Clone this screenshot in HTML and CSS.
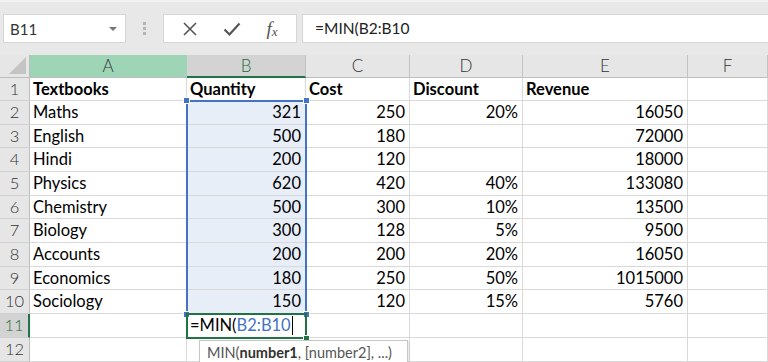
FILE: index.html
```html
<!doctype html>
<html>
 <head>
  <meta charset="UTF-8">
  <title>MIN</title>
  <link rel="stylesheet" href="styles.css">
 </head>
 <body>
  <!--S. bar-->
  <div class="bar">
   <div class="namebox"><span>B11</span><i class="drop"></i></div>
   <div class="grip"><b></b><b></b><b></b></div>
   <div class="fbtns">
    <svg width="16" height="16" viewBox="0 0 16 16"><path d="M2 2L14 14M14 2L2 14" stroke="#555" stroke-width="1.6" fill="none"/></svg>
    <svg width="18" height="16" viewBox="0 0 18 16"><path d="M1.5 8.5L6.5 13.5L16.5 2.5" stroke="#555" stroke-width="2.2" fill="none"/></svg>
    <span class="fx">f<sub>x</sub></span>
   </div>
   <div class="finput">=MIN(B2:B10</div>
  </div>
  <!--E. bar-->

  <!--S. sheet-->
  <div class="sheet">
   <div class="grid">
    <div class="corner"><i></i></div>
    <div class="ch sel">A</div><div class="ch act">B</div><div class="ch">C</div><div class="ch">D</div><div class="ch">E</div><div class="ch">F</div>

    <div class="rh">1</div><div class="c b">Textbooks</div><div class="c b">Quantity</div><div class="c b">Cost</div><div class="c b">Discount</div><div class="c b">Revenue</div><div class="c"></div>
    <div class="rh">2</div><div class="c">Maths</div><div class="c n r">321</div><div class="c n">250</div><div class="c n">20%</div><div class="c n">16050</div><div class="c"></div>
    <div class="rh">3</div><div class="c">English</div><div class="c n r">500</div><div class="c n">180</div><div class="c n"></div><div class="c n">72000</div><div class="c"></div>
    <div class="rh">4</div><div class="c">Hindi</div><div class="c n r">200</div><div class="c n">120</div><div class="c n"></div><div class="c n">18000</div><div class="c"></div>
    <div class="rh">5</div><div class="c">Physics</div><div class="c n r">620</div><div class="c n">420</div><div class="c n">40%</div><div class="c n">133080</div><div class="c"></div>
    <div class="rh">6</div><div class="c">Chemistry</div><div class="c n r">500</div><div class="c n">300</div><div class="c n">10%</div><div class="c n">13500</div><div class="c"></div>
    <div class="rh">7</div><div class="c">Biology</div><div class="c n r">300</div><div class="c n">128</div><div class="c n">5%</div><div class="c n">9500</div><div class="c"></div>
    <div class="rh">8</div><div class="c">Accounts</div><div class="c n r">200</div><div class="c n">200</div><div class="c n">20%</div><div class="c n">16050</div><div class="c"></div>
    <div class="rh">9</div><div class="c">Economics</div><div class="c n r">180</div><div class="c n">250</div><div class="c n">50%</div><div class="c n">1015000</div><div class="c"></div>
    <div class="rh">10</div><div class="c">Sociology</div><div class="c n r">150</div><div class="c n">120</div><div class="c n">15%</div><div class="c n">5760</div><div class="c"></div>
    <div class="rh cur">11</div><div class="c"></div><div class="c edit">=MIN(<span class="ref">B2:B10</span><i class="caret"></i></div><div class="c"></div><div class="c"></div><div class="c"></div><div class="c"></div>
    <div class="rh">12</div><div class="c"></div><div class="c"></div><div class="c"></div><div class="c"></div><div class="c"></div><div class="c"></div>
   </div>

   <!-- range + active cell overlays -->
   <div class="range"><i class="h tl"></i><i class="h tr"></i><i class="h bl"></i><i class="h br"></i></div>
   <div class="active"><i class="h br g"></i></div>
   <div class="tip">MIN(<b>number1</b>, [number2], ...)</div>
  </div>
  <!--E. sheet-->
 </body>
</html>
```

FILE: styles.css
```css
*{padding:0;margin:0;box-sizing:border-box;}
body{background:#e8e8e8;font-family:Lato,"Open Sans",sans-serif;color:#000;width:768px;height:362px;overflow:hidden;}

/*S. bar*/
.bar{height:55px;display:flex;align-items:flex-start;padding:14px 0 0 3px;border-top:2px solid #f2f2f2;}
.namebox{width:123px;height:29px;background:#fff;border:1px solid #d6d6d6;display:flex;align-items:center;justify-content:space-between;padding:0 8px 0 6px;font-size:15px;color:#333;margin-top:-2px;}
.namebox .drop{width:0;height:0;border-left:4px solid transparent;border-right:4px solid transparent;border-top:4px solid #777;}
.grip{width:37px;height:29px;display:flex;flex-direction:column;align-items:center;justify-content:center;gap:2px;margin-top:-2px;}
.grip b{width:3px;height:3px;background:#b5b5b5;}
.fbtns{width:134px;height:29px;background:#fff;border:1px solid #d6d6d6;display:flex;align-items:center;justify-content:space-around;padding:0 6px;margin-top:-2px;}
.fx{font-family:"Liberation Serif",serif;font-style:italic;font-size:19px;color:#555;line-height:1;}
.fx sub{font-size:13px;vertical-align:-1px;}
.finput{flex:1;height:29px;background:#fff;border:1px solid #d6d6d6;border-right:none;margin:-2px 0 0 5px;padding:0 12px;font-size:15.5px;line-height:27px;color:#222;}
/*E. bar*/

/*S. sheet*/
.sheet{position:relative;}
.grid{display:grid;grid-template-columns:30px 157px 119px 104px 113px 165px 80px;grid-template-rows:23px 23px 24px 23px 24px 24px 23px 24px 24px 23px 24px 24px 24px;background:#fff;}
.corner{background:#e6e6e6;border-right:1px solid #bdbdbd;border-bottom:1px solid #bdbdbd;position:relative;}
.corner i{position:absolute;right:3px;bottom:3px;width:0;height:0;border-left:17px solid transparent;border-bottom:17px solid #c4c4c4;}
.ch{background:#e6e6e6;border-right:1px solid #c3c3c3;border-bottom:1px solid #bdbdbd;text-align:center;font-size:17px;font-weight:300;line-height:22px;color:#333;}
.ch.sel{background:#9fd5b7;border-right-color:#9fd5b7;}
.ch.act{background:#d3d3d3;border-bottom:2px solid #217346;color:#1f6b3f;}
.rh{background:#e6e6e6;border-right:1px solid #bdbdbd;border-bottom:1px solid #d0d0d0;text-align:center;font-size:16.5px;font-weight:300;color:#333;line-height:23px;}
.rh.cur{background:#d3d3d3;border-right:2px solid #217346;color:#1f6b3f;}
.c{border-right:1px solid #d9d9d9;border-bottom:1px solid #d9d9d9;font-size:16.5px;line-height:23px;padding:0 4px 0 3px;white-space:nowrap;overflow:hidden;}
.c.b{font-weight:700;}
.c.n{text-align:right;}
.c.r{background:#e8eef8;}
.edit{font-weight:400;display:flex;align-items:center;}
.edit .ref{color:#4472c4;}
.caret{display:inline-block;width:1px;height:19px;background:#000;margin-left:1px;}

.range{position:absolute;left:186px;top:45px;width:121px;height:215px;border:2px solid #4472c4;}
.active{position:absolute;left:186px;top:258px;width:121px;height:26px;border:2px solid #217346;}
.h{position:absolute;width:5px;height:5px;background:#4472c4;border:1px solid #fff;box-sizing:content-box;}
.h.tl{left:-5px;top:-5px;}
.h.tr{right:-5px;top:-5px;}
.h.bl{left:-5px;bottom:-5px;}
.h.br{right:-5px;bottom:-5px;}
.h.g{background:#217346;}
.tip{position:absolute;left:199px;top:285px;width:209px;height:26px;background:#fff;border:1px solid #c6c6c6;font-size:14.5px;line-height:24px;color:#555;padding-left:7px;white-space:nowrap;box-shadow:1px 1px 2px rgba(0,0,0,.12);}
.tip b{color:#333;}
/*E. sheet*/
```
